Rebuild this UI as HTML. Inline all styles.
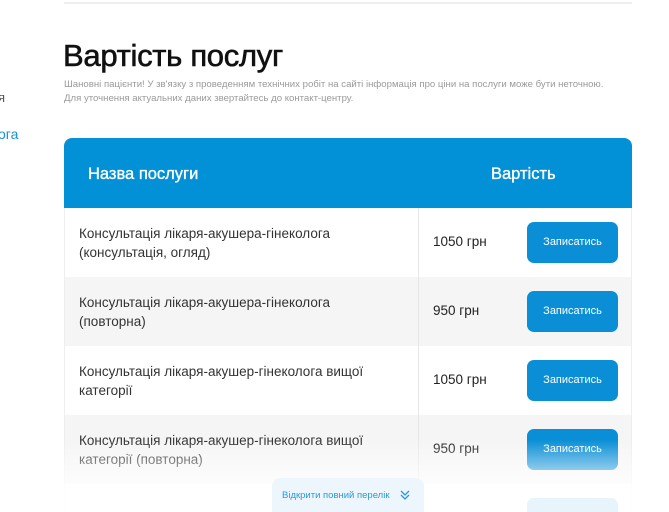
<!DOCTYPE html>
<html><head><meta charset="utf-8"><style>
*{margin:0;padding:0;box-sizing:border-box}
html,body{width:669px;height:512px;overflow:hidden}
body{background:#fff;font-family:"Liberation Sans","DejaVu Sans",sans-serif;position:relative}
.line{position:absolute;left:64px;top:2px;width:568px;height:2px;background:#eee}
.side1{position:absolute;left:-2px;top:90px;font-size:13px;color:#555}
.side2{position:absolute;left:-2px;top:126px;font-size:14px;color:#1b8fd1}
h1{position:absolute;left:63px;top:38px;font-size:31px;font-weight:normal;-webkit-text-stroke:0.6px #111;color:#111;letter-spacing:-0.3px}
.sub{position:absolute;left:64px;top:78px;font-size:9.6px;line-height:14px;color:#9a9a9a;width:580px}
.tbl{position:absolute;left:64px;top:138px;width:568px;height:374px;overflow:hidden}
.hd{height:70px;background:#0290d6;border-radius:8px 8px 0 0;color:#fff;font-size:16.5px;-webkit-text-stroke:0.35px #fff;position:relative}
.hd span{position:absolute;top:27px}
.row{height:69px;position:relative;border-left:1px solid #eee;border-right:1px solid #eee}
.row.g{background:#f5f5f5}
.row .n{position:absolute;left:14px;top:16px;font-size:13.5px;line-height:19px;color:#333;width:305px}
.row .d{position:absolute;left:353px;top:0;bottom:0;width:1px;background:#e6e6e6}
.row .p{position:absolute;left:368px;top:26px;font-size:13.5px;color:#222}
.row .b{position:absolute;left:462px;top:14px;width:91px;height:41px;border-radius:7px;background:#0a8fd6;color:#fff;font-size:11px;text-align:center;line-height:41px}
.fade{position:absolute;left:0;top:440px;width:669px;height:72px;background:linear-gradient(rgba(255,255,255,0),rgba(255,255,255,0.9) 70%)}
.more{position:absolute;left:272px;top:478px;width:152px;height:34px;background:#edf6fd;border-radius:8px 8px 0 0;color:#2a98db;font-size:9.5px;padding:12px 0 0 10px}
</style></head><body>
<div class="line"></div>
<div class="side1">я</div>
<div class="side2">ога</div>
<h1>Вартість послуг</h1>
<div class="sub">Шановні пацієнти! У зв'язку з проведенням технічних робіт на сайті інформація про ціни на послуги може бути неточною.<br>Для уточнення актуальних даних звертайтесь до контакт-центру.</div>
<div class="tbl">
<div class="hd"><span style="left:24px">Назва послуги</span><span style="left:427px">Вартість</span></div>
<div class="row"><div class="n">Консультація лікаря-акушера-гінеколога (консультація, огляд)</div><div class="d"></div><div class="p">1050 грн</div><div class="b">Записатись</div></div>
<div class="row g"><div class="n">Консультація лікаря-акушера-гінеколога (повторна)</div><div class="d"></div><div class="p">950 грн</div><div class="b">Записатись</div></div>
<div class="row"><div class="n">Консультація лікаря-акушер-гінеколога вищої категорії</div><div class="d"></div><div class="p">1050 грн</div><div class="b">Записатись</div></div>
<div class="row g"><div class="n">Консультація лікаря-акушер-гінеколога вищої категорії (повторна)</div><div class="d"></div><div class="p">950 грн</div><div class="b">Записатись</div></div>
<div class="row"><div class="d"></div><div class="b"></div></div>
</div>
<div class="fade"></div>
<div class="more">Відкрити повний перелік <svg width="12" height="12" viewBox="0 0 12 12" style="position:absolute;left:127px;top:11px" fill="none" stroke="#2a98db" stroke-width="1.3"><path d="M2 2l4 4 4-4M2 6l4 4 4-4"/></svg></div>
</body></html>
